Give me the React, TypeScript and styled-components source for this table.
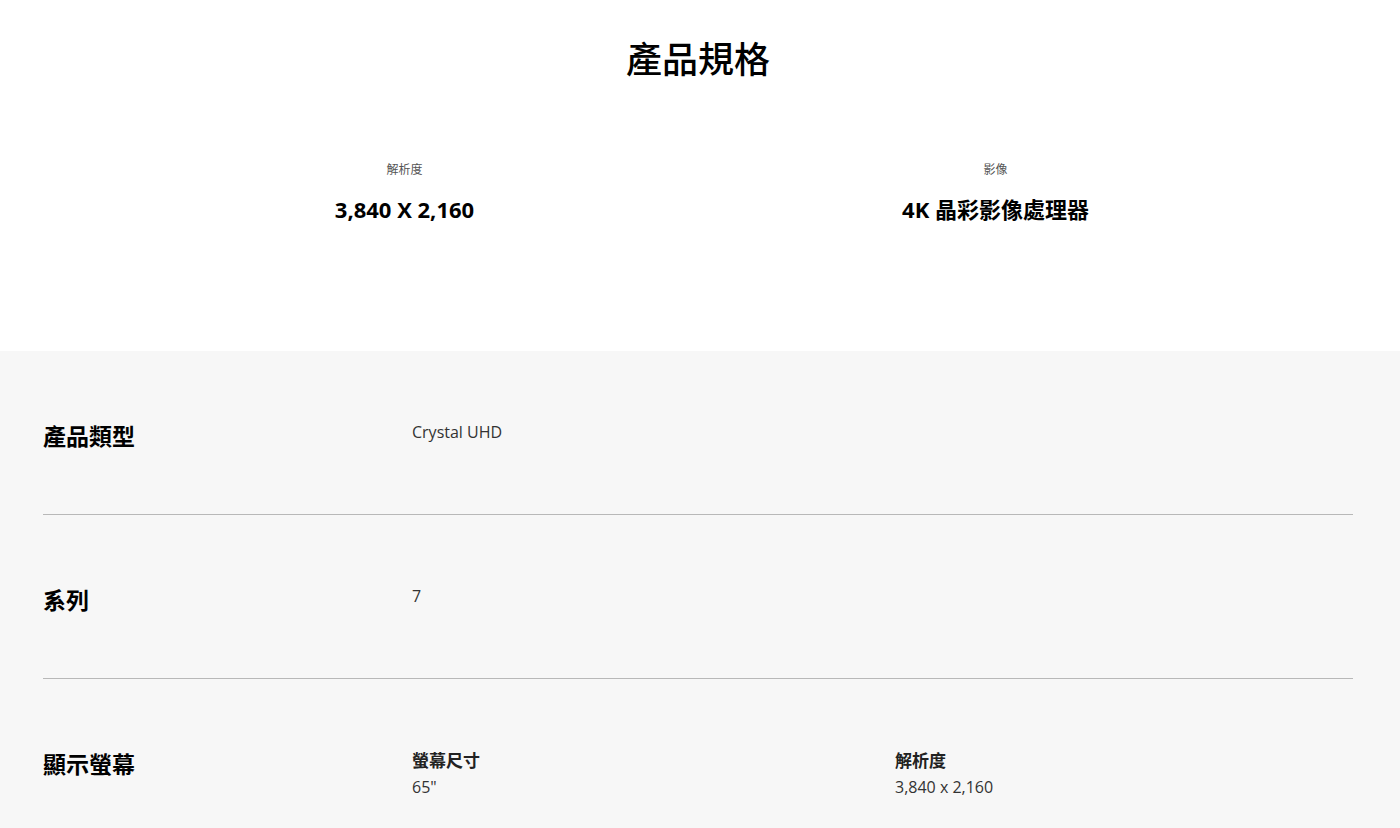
import React from "react";
import styled, { createGlobalStyle } from "styled-components";

const Global = createGlobalStyle`
  html, body { margin: 0; padding: 0; background: #fff; }
  body { font-family: "Open Sans", "Noto Sans CJK TC", sans-serif; color: #000; }
`;

const Page = styled.div`
  width: 1400px;
  min-height: 828px;
  overflow: hidden;
`;

const Top = styled.section`
  height: 351px;
  box-sizing: border-box;
  padding-top: 33px;
  background: #fff;
`;

const Title = styled.h2`
  margin: 0;
  text-align: center;
  font-size: 36px;
  line-height: 48px;
  font-weight: 500;
  font-family: "Noto Sans CJK TC", sans-serif;
  padding-right: 4px;
`;

const Highlights = styled.div`
  margin: 79px auto 0;
  width: 1182px;
  display: grid;
  grid-template-columns: 1fr 1fr;
`;

const Highlight = styled.div`
  display: flex;
  flex-direction: column;
  align-items: center;
  gap: 16px;
`;

const HLabel = styled.div`
  font-size: 12px;
  line-height: 18px;
  color: #555;
  font-family: "Noto Sans CJK TC", sans-serif;
`;

const HValue = styled.div`
  font-size: 22px;
  line-height: 30px;
  font-weight: 700;
  color: #000;
  font-family: "Open Sans", "Noto Sans CJK TC", sans-serif;
`;

const Specs = styled.section`
  background: #f7f7f7;
  padding: 0 47px 40px 43px;
`;

const Row = styled.div<{ $last?: boolean }>`
  display: grid;
  grid-template-columns: 369px 483px 1fr;
  align-items: start;
  padding: 68px 0 ${(p) => (p.$last ? "0" : "63px")};
  border-bottom: ${(p) => (p.$last ? "none" : "1px solid #b8b8b8")};
`;

const RowLabel = styled.div`
  font-size: 23px;
  line-height: 32px;
  font-weight: 700;
  font-family: "Noto Sans CJK TC", sans-serif;
  color: #000;
`;

const Cell = styled.div`
  display: flex;
  flex-direction: column;
`;

const CellTitle = styled.div`
  font-size: 17px;
  line-height: 26px;
  font-weight: 700;
  color: #222;
  font-family: "Noto Sans CJK TC", sans-serif;
`;

const CellValue = styled.div`
  font-size: 16px;
  line-height: 26px;
  color: #333;
  font-family: "Open Sans", "Noto Sans CJK TC", sans-serif;
`;

const SubValue = styled(CellValue)`
  line-height: 28px;
`;

export default function App() {
  return (
    <Page>
      <Global />
      <Top>
        <Title>產品規格</Title>
        <Highlights>
          <Highlight>
            <HLabel>解析度</HLabel>
            <HValue>3,840 X 2,160</HValue>
          </Highlight>
          <Highlight>
            <HLabel>影像</HLabel>
            <HValue>4K 晶彩影像處理器</HValue>
          </Highlight>
        </Highlights>
      </Top>
      <Specs>
        <Row>
          <RowLabel>產品類型</RowLabel>
          <Cell>
            <CellValue>Crystal UHD</CellValue>
          </Cell>
        </Row>
        <Row>
          <RowLabel>系列</RowLabel>
          <Cell>
            <CellValue>7</CellValue>
          </Cell>
        </Row>
        <Row $last>
          <RowLabel>顯示螢幕</RowLabel>
          <Cell>
            <CellTitle>螢幕尺寸</CellTitle>
            <SubValue>65"</SubValue>
          </Cell>
          <Cell>
            <CellTitle>解析度</CellTitle>
            <SubValue>3,840 x 2,160</SubValue>
          </Cell>
        </Row>
      </Specs>
    </Page>
  );
}
